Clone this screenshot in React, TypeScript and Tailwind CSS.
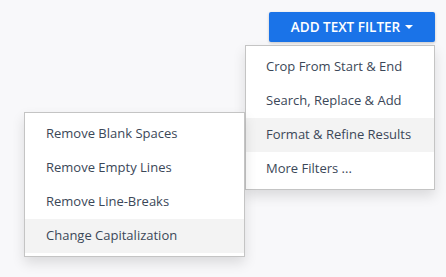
import React from 'react';

const mainItems = ['Crop From Start & End', 'Search, Replace & Add', 'Format & Refine Results', 'More Filters ...'];
const subItems = ['Remove Blank Spaces', 'Remove Empty Lines', 'Remove Line-Breaks', 'Change Capitalization'];

export default function App() {
  return (
    <div
      className="w-[446px] h-[277px] bg-[#f8f8fa] flex justify-end pt-[12px] pr-[11px]"
      style={{ fontFamily: '"Open Sans", "Noto Sans", sans-serif' }}
    >
      <div className="relative h-[30px]">
        {/* Toggle Button */}
        <button className="w-[166px] h-[30px] rounded-[2px] bg-[#1a73e8] text-white text-[13.5px] font-semibold flex items-center justify-center gap-[5px] shadow-[0_1px_3px_rgba(0,0,0,0.2)]">
          ADD TEXT FILTER
          <span className="w-0 h-0 border-l-[4px] border-r-[4px] border-t-[4px] border-l-transparent border-r-transparent border-t-white" />
        </button>

        {/* Dropdown Menu */}
        <div className="absolute right-0 top-[33px] w-[190px] bg-white border border-[#c4c4c4] py-[4px] pb-[3px] shadow-[0_6px_12px_rgba(0,0,0,0.12)]">
          {mainItems.map((label, idx) => (
            <div
              key={idx}
              className={`relative h-[34px] pl-[20px] flex items-center text-[13px] text-[#3b4758] ${
                idx === 2 ? 'bg-[#f3f3f3]' : ''
              }`}
            >
              {label}
              {/* Submenu flyout */}
              {idx === 2 && (
                <div className="absolute right-[189px] top-[-6px] w-[221px] bg-white border border-[#c4c4c4] py-[4px] pb-[3px] shadow-[0_6px_12px_rgba(0,0,0,0.12)]">
                  {subItems.map((sub, j) => (
                    <div
                      key={j}
                      className={`h-[34px] pl-[21px] flex items-center text-[13px] text-[#3b4758] ${
                        j === 3 ? 'bg-[#f3f3f3]' : ''
                      }`}
                    >
                      {sub}
                    </div>
                  ))}
                </div>
              )}
            </div>
          ))}
        </div>
      </div>
    </div>
  );
}
